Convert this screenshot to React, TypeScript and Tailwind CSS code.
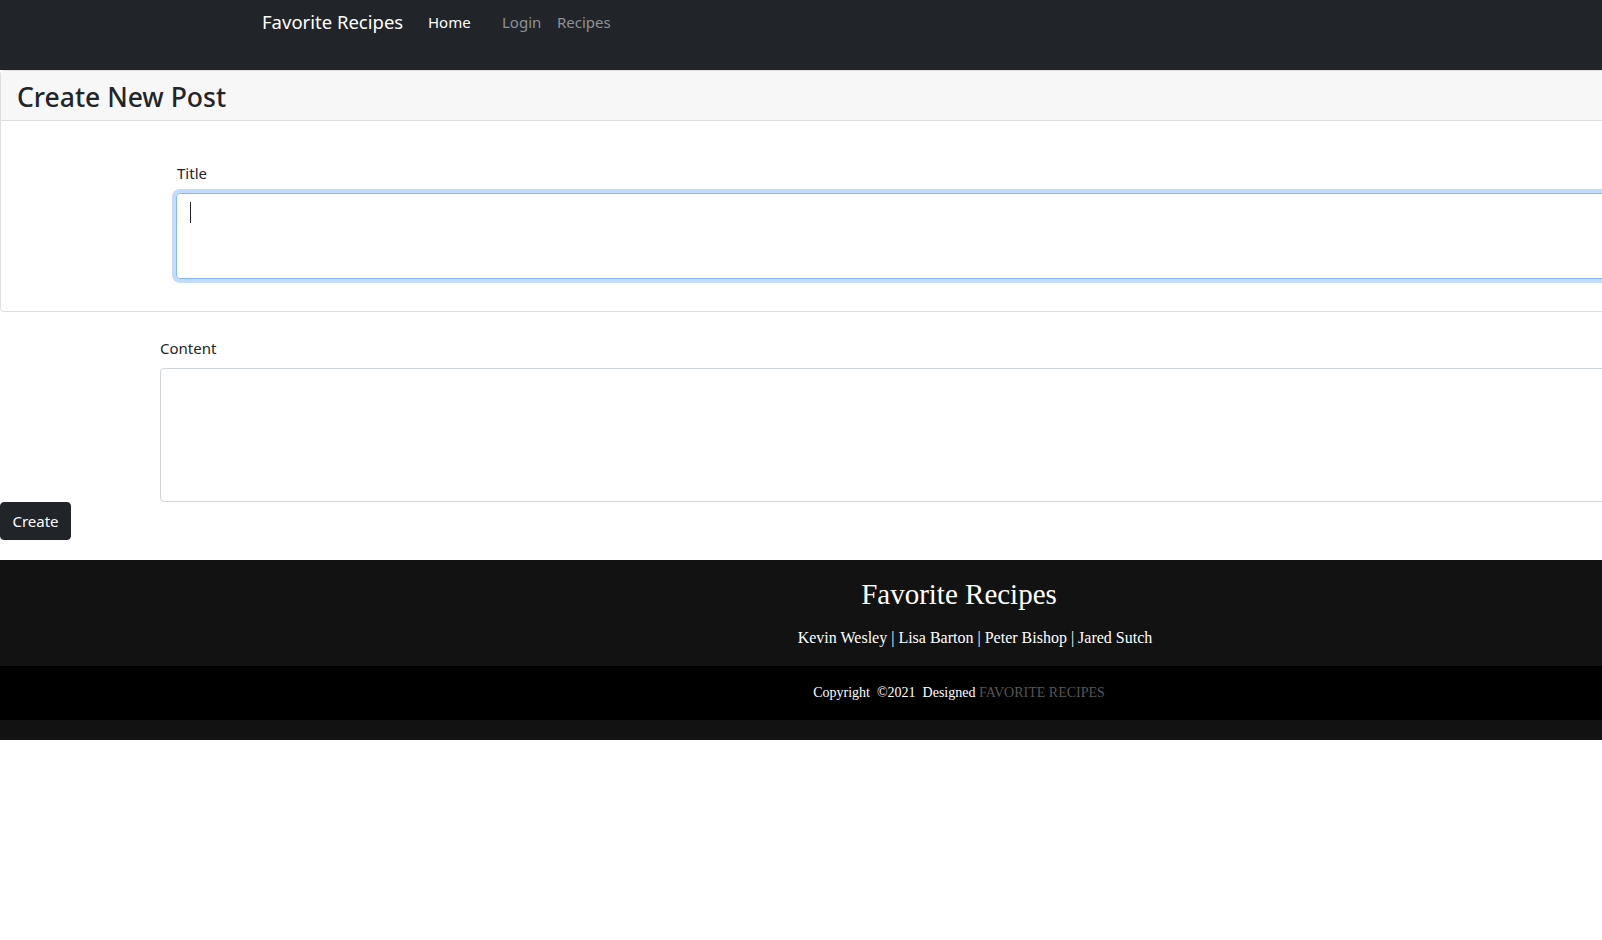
import { useState } from 'react';

const sans = "font-['Noto_Sans','Open_Sans',sans-serif]";

export default function App() {
  const [title, setTitle] = useState('');
  const [content, setContent] = useState('');

  return (
    <div className="w-full overflow-hidden bg-white">
      <div className={`w-[1918px] ${sans} text-[#212529]`}>
        <nav className="h-[70px] bg-[#212529] pt-[7px]">
          <div className="flex h-[30px] items-center pl-[262px]">
            <a className="w-[166px] text-[18.5px] leading-[30px] text-white">Favorite Recipes</a>
            <a className="w-[74px] text-[15px] text-white">Home</a>
            <a className="w-[55px] text-[15px] text-[#8f9194]">Login</a>
            <a className="text-[15px] text-[#8f9194]">Recipes</a>
          </div>
        </nav>

        <section className="rounded-[4px] border border-[#dfdfdf]">
          <header className="h-[50px] border-b border-[#dfdfdf] bg-[#f7f7f7] pt-[2px] pl-4">
            <h3 className="text-[26.5px] leading-[48px] font-medium">Create New Post</h3>
          </header>
          <div className="pt-10 pb-4 pl-[175px]">
            <label htmlFor="title" className="mb-2 block pl-px text-[15px] leading-6">
              Title
            </label>
            <div className="relative mb-4">
              <textarea
                id="title"
                value={title}
                onChange={(e) => setTitle(e.target.value)}
                className="block h-[86px] w-full resize-none rounded-[4px] border border-[#86b7fe] px-3 py-1.5 text-base leading-6 caret-transparent shadow-[0_0_0_4px_rgba(13,110,253,0.25)] outline-none"
              />
              {title === '' && (
                <span className="pointer-events-none absolute top-[9px] left-[14px] h-[21px] w-px bg-[#212529]" />
              )}
            </div>
          </div>
        </section>

        <div className="pt-6 pl-[160px]">
          <label htmlFor="content" className="mb-2 block text-[15px] leading-6">
            Content
          </label>
          <textarea
            id="content"
            value={content}
            onChange={(e) => setContent(e.target.value)}
            className="block h-[134px] w-full resize-none rounded-[4px] border border-[#ced4da] px-3 py-1.5 text-base leading-6 outline-none"
          />
        </div>
        <button className="block h-[38px] w-[71px] rounded-[4px] border border-[#212529] bg-[#212529] text-[15px] leading-6 text-white">
          Create
        </button>

        <footer className="mt-5 bg-[#121212] font-['Liberation_Serif',serif] text-white">
          <div className="h-[106px] pt-[18px] text-center">
            <h2 className="text-[29px] leading-8">Favorite Recipes</h2>
            <p className="mt-4 pl-8 text-[16px] leading-6">
              Kevin Wesley | Lisa Barton | Peter Bishop | Jared Sutch
            </p>
          </div>
          <div className="flex h-[54px] items-center justify-center bg-black pb-px text-[14px]">
            <span>
              Copyright&nbsp;&nbsp;©2021&nbsp;&nbsp;Designed <span className="text-[#555555]">FAVORITE RECIPES</span>
            </span>
          </div>
          <div className="h-5" />
        </footer>
      </div>
    </div>
  );
}
